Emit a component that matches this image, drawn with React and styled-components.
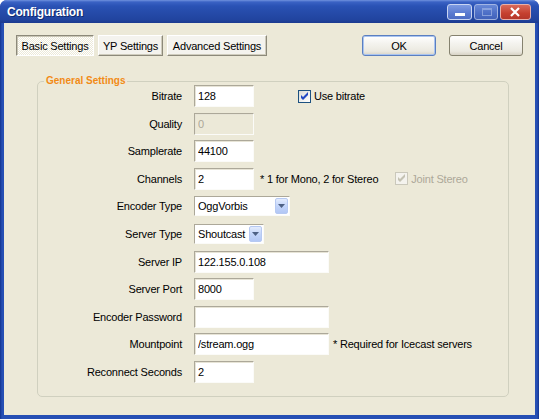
import React from 'react';
import styled, { createGlobalStyle } from 'styled-components';

const GlobalStyle = createGlobalStyle`
  html, body {
    margin: 0;
    padding: 0;
    background: #fff;
  }
  body {
    font-family: Tahoma, "Liberation Sans", Arial, sans-serif;
    font-size: 11px;
    letter-spacing: -0.2px;
    color: #000;
  }
`;

const Window = styled.div`
  width: 539px;
  height: 419px;
  display: flex;
  flex-direction: column;
  background: linear-gradient(to right, #13338f 0, #264fb4 2px, #264fb4 calc(100% - 2px), #13338f 100%);
  border-radius: 7px 7px 0 0;
  overflow: hidden;
`;

const TitleBar = styled.div`
  height: 23px;
  flex: none;
  display: flex;
  align-items: center;
  justify-content: space-between;
  padding: 0 8px 0 7px;
  background: linear-gradient(to bottom, #7092de 0, #3a62c4 2px, #2a52b5 6px, #264cab 50%, #21449f 85%, #1b3a8f 100%);
`;

const Title = styled.span`
  color: #fff;
  font-family: "Liberation Sans", Arial, sans-serif;
  font-weight: bold;
  font-size: 12px;
  letter-spacing: -0.2px;
  text-shadow: 1px 1px 0 #10296e;
`;

const Caption = styled.div`
  display: flex;
  gap: 2px;
  align-self: flex-start;
  margin-top: 4px;
`;

const CaptionButton = styled.span`
  width: ${p => p.$w}px;
  height: 16px;
  box-sizing: border-box;
  display: flex;
  align-items: center;
  justify-content: center;
  border: 1px solid ${p => (p.$close ? '#e9b0a8' : '#c9d5f2')};
  border-radius: 3px;
  background: ${p =>
    p.$close
      ? 'linear-gradient(#d96a5a, #c5402f 60%, #b5372a)'
      : 'linear-gradient(#7d9ae2, #5a7ad0 60%, #4d6cc4)'};
  opacity: ${p => (p.$faded ? 0.75 : 1)};
`;

const Client = styled.div`
  flex: 1;
  margin: 0 4px 4px;
  background: #ece9d8;
  display: flex;
  flex-direction: column;
  padding: 12px 12px 0;
`;

const Toolbar = styled.div`
  display: flex;
  justify-content: space-between;
  align-items: center;
`;

const Tabs = styled.div`
  display: flex;
  gap: 4px;
`;

const TabButton = styled.span`
  width: ${p => p.$w}px;
  height: 21px;
  box-sizing: border-box;
  display: flex;
  align-items: center;
  justify-content: center;
  border: 1px solid;
  border-color: ${p => (p.$active ? '#8c897a #fff #fff #8c897a' : '#fff #8c897a #8c897a #fff')};
  box-shadow: ${p => (p.$active ? 'inset 1px 1px 0 #c9c6b6' : 'inset -1px -1px 0 #cfccbd')};
  background: ${p =>
    p.$active
      ? 'repeating-conic-gradient(#fff 0 25%, #ece9d8 0 50%) 0 0 / 2px 2px'
      : '#f4f3ee'};
  white-space: nowrap;
`;

const Actions = styled.div`
  display: flex;
  gap: 13px;
`;

const PushButton = styled.span`
  width: 74px;
  height: 21px;
  box-sizing: border-box;
  display: flex;
  align-items: center;
  justify-content: center;
  border: 1px solid ${p => (p.$default ? '#5b7fc0' : '#85826f')};
  border-radius: 3px;
  background: linear-gradient(#fff, #f4f3ee 40%, #ebe9e0 80%, #d8d3c6);
  box-shadow: ${p => (p.$default ? 'inset 0 0 0 1px #a9c4f0' : 'none')};
`;

const GroupBox = styled.fieldset`
  margin: 19px 0 0 21px;
  width: 472px;
  min-width: 0;
  box-sizing: border-box;
  border: 1px solid #d0d0bf;
  border-radius: 5px;
  padding: 0 0 13px;
`;

const Legend = styled.legend`
  margin-left: 6px;
  padding: 0 2px;
  color: #f28b16;
  font-family: "Liberation Sans", Arial, sans-serif;
  font-weight: bold;
  font-size: 10px;
  letter-spacing: 0;
  line-height: 12px;
`;

const Form = styled.div`
  display: grid;
  grid-template-columns: 144px 1fr;
  column-gap: 12px;
  grid-auto-rows: 22px;
  row-gap: 5.6px;
  margin-top: -2px;
`;

const Label = styled.span`
  justify-self: end;
  align-self: center;
  white-space: nowrap;
`;

const Field = styled.div`
  display: flex;
  align-items: center;
  min-width: 0;
`;

const TextBox = styled.input`
  width: ${p => p.$w}px;
  height: 22px;
  box-sizing: border-box;
  margin: 0;
  padding: 0 3px;
  border: 1px solid;
  border-color: #aca899 #fbfbf8 #fbfbf8 #aca899;
  box-shadow: inset 1px 1px 0 #e7e4d6;
  background: ${p => (p.disabled ? '#ece9d8' : '#fff')};
  color: ${p => (p.disabled ? '#aca899' : '#000')};
  -webkit-text-fill-color: ${p => (p.disabled ? '#aca899' : '#000')};
  font: inherit;
  letter-spacing: inherit;
  outline: none;
`;

const Combo = styled.div`
  width: ${p => p.$w}px;
  height: 20px;
  box-sizing: border-box;
  display: flex;
  align-items: center;
  justify-content: space-between;
  padding: 0 1px 0 3px;
  border: 1px solid;
  border-color: #aca899 #fbfbf8 #fbfbf8 #aca899;
  background: #fff;
`;

const DropButton = styled.span`
  width: 13px;
  height: 16px;
  box-sizing: border-box;
  display: flex;
  align-items: center;
  justify-content: center;
  border: 1px solid #b6c9f2;
  border-radius: 2px;
  background: linear-gradient(#e4ecfd, #c3d5fa 50%, #b2c7f5);
`;

const Note = styled.span`
  margin-left: ${p => p.$gap}px;
  white-space: nowrap;
`;

const CheckWrap = styled.label`
  display: flex;
  align-items: center;
  gap: 3px;
  margin-left: ${p => p.$gap}px;
  color: ${p => (p.$disabled ? '#aca899' : '#000')};
  white-space: nowrap;
`;

const CheckBox = styled.span`
  width: 13px;
  height: 13px;
  box-sizing: border-box;
  display: flex;
  align-items: center;
  justify-content: center;
  border: 1px solid ${p => (p.$disabled ? '#cac8bb' : '#1c5180')};
  background: ${p => (p.$disabled ? '#f4f3ee' : 'linear-gradient(135deg, #dcdcd7, #fff)')};
`;

const Check = ({ label, gap, disabled }) => (
  <CheckWrap $gap={gap} $disabled={disabled}>
    <CheckBox $disabled={disabled}>
      <svg width="9" height="9" viewBox="0 0 9 9">
        <polygon points="1,3 3,5 8,0 8,3 3,8 1,6" fill={disabled ? '#c4c2b3' : '#2149c4'} />
      </svg>
    </CheckBox>
    {label}
  </CheckWrap>
);

const Dropdown = ({ w, value }) => (
  <Combo $w={w}>
    {value}
    <DropButton>
      <svg width="7" height="4" viewBox="0 0 7 4">
        <polygon points="0,0 7,0 3.5,4" fill="#4d6185" />
      </svg>
    </DropButton>
  </Combo>
);

const rows = [
  {
    label: 'Bitrate',
    field: <TextBox $w={60} value="128" readOnly />,
    extra: <Check gap={44} label="Use bitrate" />,
  },
  { label: 'Quality', field: <TextBox $w={60} value="0" disabled readOnly /> },
  { label: 'Samplerate', field: <TextBox $w={60} value="44100" readOnly /> },
  {
    label: 'Channels',
    field: <TextBox $w={60} value="2" readOnly />,
    extra: (
      <>
        <Note $gap={6}>* 1 for Mono, 2 for Stereo</Note>
        <Check gap={17} label="Joint Stereo" disabled />
      </>
    ),
  },
  { label: 'Encoder Type', field: <Dropdown w={96} value="OggVorbis" /> },
  { label: 'Server Type', field: <Dropdown w={70} value="Shoutcast" /> },
  { label: 'Server IP', field: <TextBox $w={135} value="122.155.0.108" readOnly /> },
  { label: 'Server Port', field: <TextBox $w={60} value="8000" readOnly /> },
  { label: 'Encoder Password', field: <TextBox $w={135} value="" readOnly /> },
  {
    label: 'Mountpoint',
    field: <TextBox $w={135} value="/stream.ogg" readOnly />,
    extra: <Note $gap={4}>* Required for Icecast servers</Note>,
  },
  { label: 'Reconnect Seconds', field: <TextBox $w={60} value="2" readOnly /> },
];

export default function App() {
  return (
    <>
      <GlobalStyle />
      <Window>
        <TitleBar>
          <Title>Configuration</Title>
          <Caption>
            <CaptionButton $w={25}>
              <svg width="23" height="14" viewBox="0 0 23 14">
                <rect x="7" y="8" width="10" height="3" fill="#fff" />
              </svg>
            </CaptionButton>
            <CaptionButton $w={24} $faded>
              <svg width="22" height="14" viewBox="0 0 22 14">
                <rect x="7.5" y="3.5" width="9" height="7" fill="none" stroke="#a9bdee" />
                <rect x="7.5" y="3.5" width="9" height="1.5" fill="#a9bdee" />
              </svg>
            </CaptionButton>
            <CaptionButton $w={31} $close>
              <svg width="29" height="14" viewBox="0 0 29 14">
                <path d="M10 3 L18 11 M18 3 L10 11" stroke="#fff" strokeWidth="2.2" />
              </svg>
            </CaptionButton>
          </Caption>
        </TitleBar>
        <Client>
          <Toolbar>
            <Tabs>
              <TabButton $w={78} $active>Basic Settings</TabButton>
              <TabButton $w={65}>YP Settings</TabButton>
              <TabButton $w={100}>Advanced Settings</TabButton>
            </Tabs>
            <Actions>
              <PushButton $default>OK</PushButton>
              <PushButton>Cancel</PushButton>
            </Actions>
          </Toolbar>
          <GroupBox>
            <Legend>General Settings</Legend>
            <Form>
              {rows.map(row => (
                <React.Fragment key={row.label}>
                  <Label>{row.label}</Label>
                  <Field>
                    {row.field}
                    {row.extra}
                  </Field>
                </React.Fragment>
              ))}
            </Form>
          </GroupBox>
        </Client>
      </Window>
    </>
  );
}
